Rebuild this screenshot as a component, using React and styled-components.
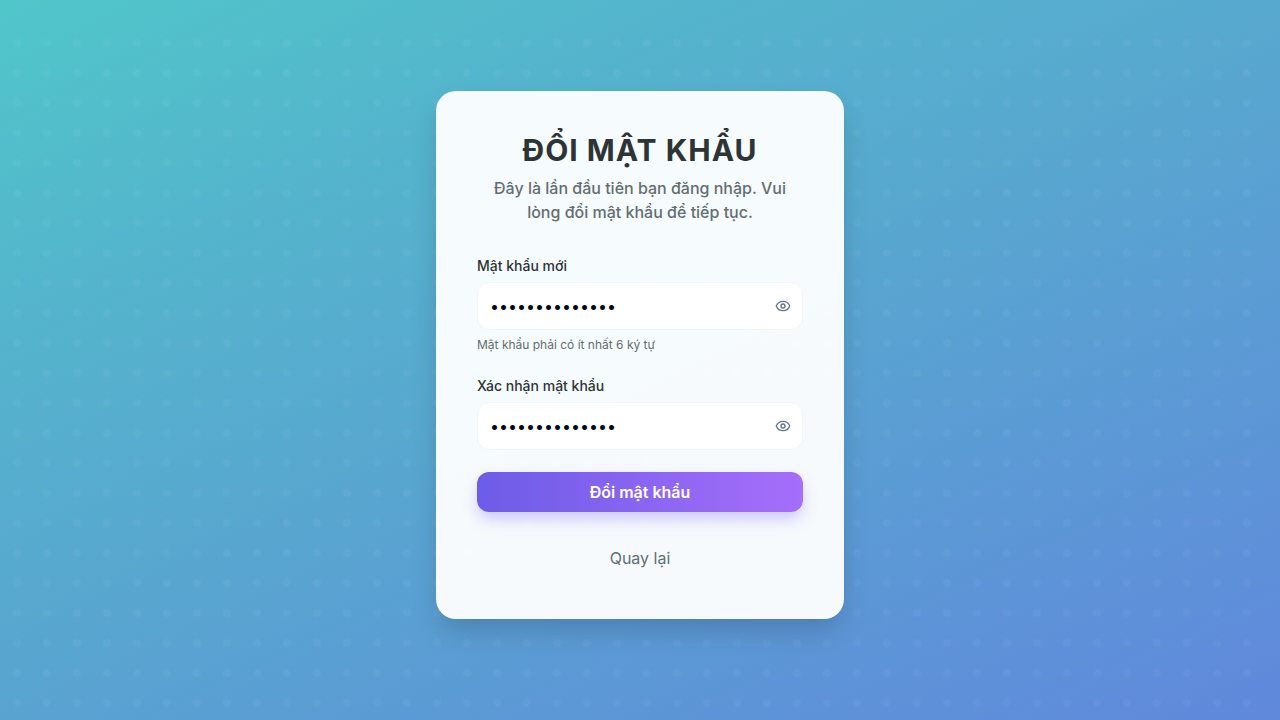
import React, { useState } from "react";
import styled, { createGlobalStyle } from "styled-components";

const GlobalStyle = createGlobalStyle`
  *, *::before, *::after { box-sizing: border-box; }
  body {
    margin: 0;
    font-family: Inter, "Liberation Sans", sans-serif;
    color: #2d3436;
  }
`;

const Page = styled.main`
  position: relative;
  min-height: 100vh;
  display: flex;
  align-items: center;
  justify-content: center;
  padding: 16px 16px 26px;
  background: linear-gradient(155deg, #50c6ca, #54b4cc 25%, #58a6d0 50%, #6088dc);
`;

const Dots = styled.div`
  position: absolute;
  inset: 28px 18px 0 0;
  background: radial-gradient(circle at 17px 15px, rgba(255, 255, 255, 0.04) 4px, transparent 4px) 0 0 / 30px 30px;
`;

const Card = styled.section`
  position: relative;
  width: 100%;
  max-width: 408px;
  padding: 41px;
  border-radius: 20px;
  background: rgba(255, 255, 255, 0.95);
  box-shadow: 0 14px 28px -4px rgba(0, 0, 0, 0.18);
`;

const Header = styled.header`
  margin-bottom: 32px;
  text-align: center;
`;

const Title = styled.h1`
  margin: 0 0 8px;
  font-size: 30px;
  line-height: 36px;
  font-weight: 700;
  letter-spacing: 1px;
  text-transform: uppercase;
`;

const Subtitle = styled.p`
  margin: 0;
  font-size: 16px;
  line-height: 24px;
  font-weight: 500;
  color: #636e72;
`;

const Form = styled.form`
  display: flex;
  flex-direction: column;
  gap: 22px;
`;

const Label = styled.label`
  display: block;
  margin-bottom: 6px;
  font-size: 14px;
  line-height: 20px;
  font-weight: 500;
`;

const InputBox = styled.div`
  display: flex;
  align-items: center;
  height: 48px;
  padding: 0 11px 0 12px;
  border: 1px solid #f1f5f9;
  border-radius: 12px;
  background: #fff;
`;

const Input = styled.input`
  flex: 1;
  min-width: 0;
  padding: 0;
  border: 0;
  outline: 0;
  background: transparent;
  font: 400 16px/24px Inter, sans-serif;
  color: #020617;
`;

const EyeButton = styled.button`
  display: flex;
  padding: 0;
  border: 0;
  background: transparent;
  color: #64748b;
  cursor: pointer;
`;

const Hint = styled.p`
  margin: 6px 0 0;
  font-size: 12px;
  line-height: 18px;
  color: #636e72;
`;

const SubmitButton = styled.button`
  height: 40px;
  border: 0;
  border-radius: 12px;
  background: linear-gradient(to right, #6c5ce7, #a66efa);
  box-shadow: 0 8px 16px -2px rgba(108, 92, 231, 0.35);
  font: 600 16px/24px Inter, sans-serif;
  color: #fff;
  cursor: pointer;
`;

const BackButton = styled.button`
  align-self: center;
  margin-top: 4px;
  padding: 8px 16px;
  border: 0;
  background: transparent;
  font: 400 16px/24px Inter, sans-serif;
  color: #636e72;
  cursor: pointer;
`;

function EyeIcon() {
  return (
    <svg width="16" height="16" viewBox="0 0 24 24" fill="none" stroke="currentColor" strokeWidth="2" strokeLinecap="round" strokeLinejoin="round" aria-hidden="true">
      <path d="M2.062 12.348a1 1 0 0 1 0-.696 10.75 10.75 0 0 1 19.876 0 1 1 0 0 1 0 .696 10.75 10.75 0 0 1-19.876 0" />
      <circle cx="12" cy="12" r="3" />
    </svg>
  );
}

function PasswordField({ id, label, hint }) {
  const [value, setValue] = useState("matkhaumoi1234");
  const [visible, setVisible] = useState(false);
  return (
    <div>
      <Label htmlFor={id}>{label}</Label>
      <InputBox>
        <Input
          id={id}
          type={visible ? "text" : "password"}
          value={value}
          onChange={(e) => setValue(e.target.value)}
        />
        <EyeButton type="button" aria-label="Hiện mật khẩu" onClick={() => setVisible(!visible)}>
          <EyeIcon />
        </EyeButton>
      </InputBox>
      {hint && <Hint>{hint}</Hint>}
    </div>
  );
}

export default function App() {
  return (
    <>
      <GlobalStyle />
      <Page>
        <Dots />
        <Card>
          <Header>
            <Title>Đổi mật khẩu</Title>
            <Subtitle>Đây là lần đầu tiên bạn đăng nhập. Vui lòng đổi mật khẩu để tiếp tục.</Subtitle>
          </Header>
          <Form onSubmit={(e) => e.preventDefault()}>
            <PasswordField id="new-password" label="Mật khẩu mới" hint="Mật khẩu phải có ít nhất 6 ký tự" />
            <PasswordField id="confirm-password" label="Xác nhận mật khẩu" />
            <SubmitButton type="submit">Đổi mật khẩu</SubmitButton>
            <BackButton type="button">Quay lại</BackButton>
          </Form>
        </Card>
      </Page>
    </>
  );
}
